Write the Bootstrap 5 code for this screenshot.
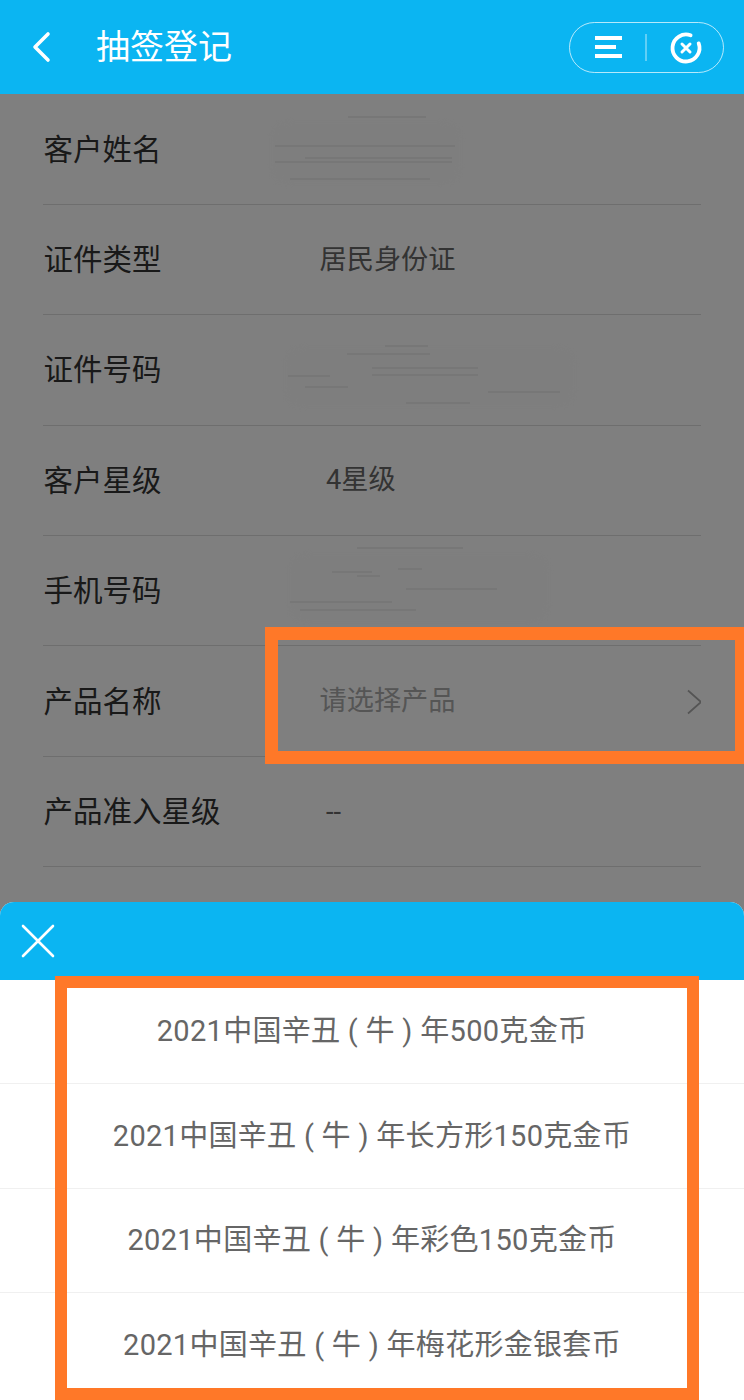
<!DOCTYPE html>
<html lang="zh-CN">
<head>
  <meta charset="UTF-8" />
  <meta name="viewport" content="width=device-width, initial-scale=1.0"/>
  <title>抽签登记</title>

  <link href="https://cdn.jsdelivr.net/npm/bootstrap@5.3.0/dist/css/bootstrap.min.css" rel="stylesheet" />

  <style>
    body {
      font-family: Roboto, "Noto Sans CJK SC", sans-serif;
      background: #fff;
      margin: 0;
    }
    .screen { width: 744px; height: 1400px; overflow: hidden; position: relative; }

    /* top bar */
    .topbar { height: 94px; background: #0bb5f2; color: #fff; position: relative; z-index: 3; }
    .back-icon { width: 24px; height: 34px; margin-left: 30px; }
    .topbar-title { font-size: 34px; margin-left: 42px; line-height: 1; }
    .capsule {
      width: 155px; height: 51px; margin-right: 20px; margin-top: 1px;
      border: 1px solid rgba(255, 255, 255, .7); border-radius: 26px;
    }
    .capsule svg { display: block; }

    /* form rows */
    .form-rows { padding: .5px 43px 0; }
    .form-line { height: 110.4px; border-bottom: 1px solid #ddd; padding-top: 1px; }
    .form-label-text { width: 219px; padding-left: .5px; font-size: 29.5px; color: #333; flex-shrink: 0; }
    .form-value { font-size: 27.2px; color: #666; padding-left: 57.5px; flex-grow: 1; }
    .form-value.star { padding-left: 64px; }
    .form-value.hint { color: #aaa; }
    .smudge { display: block; width: 330px; height: 100px; margin-top: -1px; }
    .smudge rect { fill: #fdfdfd; filter: blur(6px); }
    .smudge line { stroke: #e8e8e8; stroke-width: 1.5; }

    .page-mask { position: absolute; inset: 94px 0 0 0; background: rgba(0, 0, 0, .5); z-index: 1; }

    /* bottom sheet */
    .sheet { position: absolute; left: 0; right: 0; top: 902px; bottom: 0; z-index: 2; background: #fff; border-radius: 14px 14px 0 0; overflow: hidden; }
    .sheet-head { height: 78px; background: #0bb5f2; padding-left: 20px; }
    .product-item {
      height: 104.4px; border: 0; border-bottom: 2px solid #f0f0f0; border-radius: 0;
      font-size: 29px; letter-spacing: .3px; color: #666; padding: 1px 0 0;
    }

    /* orange annotations from the screenshot */
    .mark-box { position: absolute; border: solid #ff7828; z-index: 4; }
    .mark-product { left: 265px; top: 627px; width: 483px; height: 137px; border-width: 13px; }
    .mark-list { left: 55px; top: 976px; width: 644px; height: 424px; border-width: 12px; }
  </style>
</head>

<body>
  <div class="screen">
    <div class="topbar d-flex align-items-center">
      <svg class="back-icon" viewBox="0 0 24 34" fill="none" stroke="#fff" stroke-width="3.6" stroke-linecap="round" stroke-linejoin="round"><path d="M18 4 5 17l13 13"/></svg>
      <div class="topbar-title">抽签登记</div>
      <div class="capsule ms-auto d-flex align-items-center">
        <svg width="153" height="49" viewBox="0 0 153 49" fill="none" stroke="#fff">
          <path d="M25 15h27M25 24h21M25 33h27" stroke-width="4.2"/>
          <path d="M76 11v27" stroke-width="1" stroke-opacity=".7"/>
          <path d="M120.600 12.300A13.500 13.500 0 1 0 128.700 20.400" stroke-width="3.800" stroke-linecap="round"/>
          <path d="M112 21l8 8m0-8-8 8" stroke-width="3" stroke-linecap="round"/>
        </svg>
      </div>
    </div>

    <div class="form-rows">
      <div class="form-line d-flex align-items-center">
        <div class="form-label-text">客户姓名</div>
        <div class="flex-grow-1">
          <svg class="smudge" viewBox="0 0 330 100">
            <rect x="4" y="18" width="200" height="72" rx="20"/>
            <line x1="86" y1="18" x2="164" y2="18"/>
            <line x1="13" y1="47" x2="193" y2="47"/>
            <line x1="43" y1="59" x2="190" y2="59"/>
            <line x1="13" y1="63" x2="190" y2="63"/>
            <line x1="28" y1="80" x2="168" y2="80"/>
          </svg>
        </div>
      </div>
      <div class="form-line d-flex align-items-center">
        <div class="form-label-text">证件类型</div>
        <div class="form-value">居民身份证</div>
      </div>
      <div class="form-line d-flex align-items-center">
        <div class="form-label-text">证件号码</div>
        <div class="flex-grow-1">
          <svg class="smudge" viewBox="0 0 330 100">
            <rect x="18" y="22" width="300" height="70" rx="20"/>
            <line x1="123" y1="26" x2="166" y2="26"/>
            <line x1="85" y1="34" x2="168" y2="34"/>
            <line x1="110" y1="48" x2="216" y2="48"/>
            <line x1="110" y1="55" x2="216" y2="55"/>
            <line x1="26" y1="56" x2="68" y2="56"/>
            <line x1="43" y1="67" x2="86" y2="67"/>
            <line x1="226" y1="72" x2="298" y2="72"/>
            <line x1="144" y1="83" x2="208" y2="83"/>
          </svg>
        </div>
      </div>
      <div class="form-line d-flex align-items-center">
        <div class="form-label-text">客户星级</div>
        <div class="form-value star">4星级</div>
      </div>
      <div class="form-line d-flex align-items-center">
        <div class="form-label-text">手机号码</div>
        <div class="flex-grow-1">
          <svg class="smudge" viewBox="0 0 330 100">
            <rect x="22" y="8" width="270" height="78" rx="20"/>
            <line x1="95" y1="7" x2="201" y2="7"/>
            <line x1="136" y1="28" x2="160" y2="28"/>
            <line x1="70" y1="31" x2="110" y2="31"/>
            <line x1="95" y1="35" x2="118" y2="35"/>
            <line x1="144" y1="48" x2="235" y2="48"/>
            <line x1="28" y1="61" x2="130" y2="61"/>
            <line x1="38" y1="69" x2="154" y2="69"/>
          </svg>
        </div>
      </div>
      <div class="form-line d-flex align-items-center">
        <div class="form-label-text">产品名称</div>
        <div class="form-value hint">请选择产品</div>
        <svg class="flex-shrink-0" width="16" height="26" viewBox="0 0 16 26" fill="none" stroke="#aaa" stroke-width="1.700"><path d="M3 1.500 16 13 3 24.500"/></svg>
      </div>
      <div class="form-line d-flex align-items-center">
        <div class="form-label-text">产品准入星级</div>
        <div class="form-value star">--</div>
      </div>
    </div>

    <div class="page-mask"></div>

    <div class="sheet">
      <div class="sheet-head d-flex align-items-center">
        <svg width="36" height="36" viewBox="0 0 36 36" fill="none" stroke="#fff" stroke-width="2.600" stroke-linecap="round"><path d="M3 3l30 30M33 3 3 33"/></svg>
      </div>
      <div class="list-group list-group-flush">
        <div class="list-group-item product-item d-flex align-items-center justify-content-center">2021中国辛丑 ( 牛 ) 年500克金币</div>
        <div class="list-group-item product-item d-flex align-items-center justify-content-center">2021中国辛丑 ( 牛 ) 年长方形150克金币</div>
        <div class="list-group-item product-item d-flex align-items-center justify-content-center">2021中国辛丑 ( 牛 ) 年彩色150克金币</div>
        <div class="list-group-item product-item d-flex align-items-center justify-content-center">2021中国辛丑 ( 牛 ) 年梅花形金银套币</div>
      </div>
    </div>

    <div class="mark-box mark-product"></div>
    <div class="mark-box mark-list"></div>
  </div>

  <script src="https://cdn.jsdelivr.net/npm/bootstrap@5.3.0/dist/js/bootstrap.bundle.min.js"></script>
</body>
</html>
